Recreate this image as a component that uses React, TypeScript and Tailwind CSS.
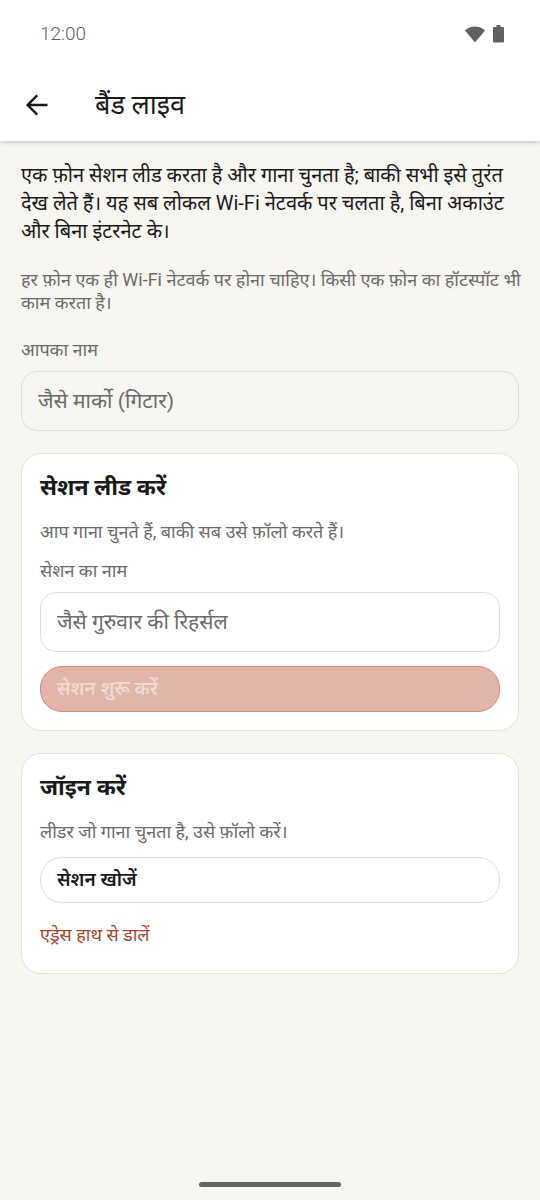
import React from "react";

function StatusBar() {
  return (
    <div className="flex h-17 items-center justify-between pl-10 pr-9 text-[#616161]">
      <span className="font-[Roboto,sans-serif] text-[19px] font-light">12:00</span>
      <div className="flex items-center gap-2">
        <svg width="20" height="17" viewBox="0 0 20 17" fill="currentColor" aria-hidden="true">
          <path d="M0 4.4C2.7 1.8 6.2.5 10 .5s7.3 1.3 10 3.9L10 16.5z" />
        </svg>
        <svg width="11" height="18" viewBox="0 0 11 18" fill="currentColor" aria-hidden="true">
          <path d="M3.5 0h4v2H10a1 1 0 0 1 1 1v13.5a1 1 0 0 1-1 1H1a1 1 0 0 1-1-1V3a1 1 0 0 1 1-1h2.5z" />
        </svg>
      </div>
    </div>
  );
}

function Header() {
  return (
    <header className="bg-white shadow-[0_1px_5px_rgba(0,0,0,0.22)]">
      <StatusBar />
      <div className="flex h-[73px] items-center gap-11 pl-[23px]">
        <button type="button" aria-label="वापस">
          <svg width="28" height="28" viewBox="0 0 24 24" fill="none" stroke="currentColor" strokeWidth="2.1" aria-hidden="true">
            <path d="M12.2 3.8 4 12l8.2 8.2M4.5 12H21" />
          </svg>
        </button>
        <h1 className="text-[27px] leading-9 font-normal">बैंड लाइव</h1>
      </div>
    </header>
  );
}

const note = "text-lg leading-[23px] text-[#6b6b6b]";
const field =
  "h-15 w-full rounded-2xl border border-[#deddd7] px-4 text-[21px] text-[#1a1a1a] placeholder:text-[#6b6b6b] outline-none";
const card = "mt-[22px] flex flex-col rounded-[20px] border border-[#e2e1da] bg-white px-[18px] pt-4";
const pill = "h-[46px] rounded-[22px] border px-4 text-left text-[19px] font-semibold";

export default function App() {
  return (
    <div className="flex min-h-screen flex-col bg-[#f7f6f1] font-[Roboto,'Noto_Sans','Noto_Sans_Devanagari',sans-serif] text-[#1a1a1a]">
      <Header />
      <main className="flex flex-1 flex-col px-[21px] pt-5">
        <p className="text-xl leading-7">
          एक फ़ोन सेशन लीड करता है और गाना चुनता है; बाकी सभी इसे तुरंत देख लेते हैं। यह सब लोकल Wi-Fi नेटवर्क पर चलता है, बिना अकाउंट और बिना इंटरनेट के।
        </p>
        <p className={`${note} mt-[23px] -mr-1`}>
          हर फ़ोन एक ही Wi-Fi नेटवर्क पर होना चाहिए। किसी एक फ़ोन का हॉटस्पॉट भी काम करता है।
        </p>
        <label htmlFor="name" className={`${note} mt-6`}>आपका नाम</label>
        <input id="name" placeholder="जैसे मार्को (गिटार)" className={`${field} mt-[10px] bg-[#f7f6f1]`} />

        <section className={`${card} pb-[18px]`}>
          <h2 className="text-[23px] leading-9 font-bold">सेशन लीड करें</h2>
          <p className={`${note} mt-[14px]`}>आप गाना चुनते हैं, बाकी सब उसे फ़ॉलो करते हैं।</p>
          <label htmlFor="session" className={`${note} mt-4`}>सेशन का नाम</label>
          <input id="session" placeholder="जैसे गुरुवार की रिहर्सल" className={`${field} mt-[10px] bg-white`} />
          <button type="button" disabled className={`${pill} mt-[14px] border-[#d08b7b] bg-[#e1b5ac] text-[#f2d9d4]`}>
            सेशन शुरू करें
          </button>
        </section>

        <section className={`${card} pb-6`}>
          <h2 className="text-[23px] leading-9 font-bold">जॉइन करें</h2>
          <p className={`${note} mt-[14px]`}>लीडर जो गाना चुनता है, उसे फ़ॉलो करें।</p>
          <button type="button" className={`${pill} mt-[14px] border-[#deddd7] bg-white`}>
            सेशन खोजें
          </button>
          <button type="button" className="mt-[18px] self-start text-lg leading-7 text-[#a8452c]">एड्रेस हाथ से डालें</button>
        </section>
      </main>
      <div className="mx-auto mb-[13px] h-[5px] w-[142px] rounded-full bg-[#65645f]" />
    </div>
  );
}
